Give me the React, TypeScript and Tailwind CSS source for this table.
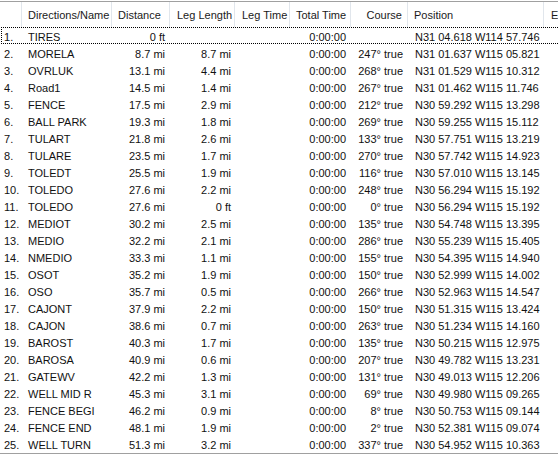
import React from "react";

const rows: [string, string, string, string, string, string][] = [
  ["TIRES", "0 ft", "", "", "", "N31 04.618 W114 57.746"],
  ["MORELA", "8.7 mi", "8.7 mi", "", "247° true", "N31 01.637 W115 05.821"],
  ["OVRLUK", "13.1 mi", "4.4 mi", "", "268° true", "N31 01.529 W115 10.312"],
  ["Road1", "14.5 mi", "1.4 mi", "", "267° true", "N31 01.462 W115 11.746"],
  ["FENCE", "17.5 mi", "2.9 mi", "", "212° true", "N30 59.292 W115 13.298"],
  ["BALL PARK", "19.3 mi", "1.8 mi", "", "269° true", "N30 59.255 W115 15.112"],
  ["TULART", "21.8 mi", "2.6 mi", "", "133° true", "N30 57.751 W115 13.219"],
  ["TULARE", "23.5 mi", "1.7 mi", "", "270° true", "N30 57.742 W115 14.923"],
  ["TOLEDT", "25.5 mi", "1.9 mi", "", "116° true", "N30 57.010 W115 13.145"],
  ["TOLEDO", "27.6 mi", "2.2 mi", "", "248° true", "N30 56.294 W115 15.192"],
  ["TOLEDO", "27.6 mi", "0 ft", "", "0° true", "N30 56.294 W115 15.192"],
  ["MEDIOT", "30.2 mi", "2.5 mi", "", "135° true", "N30 54.748 W115 13.395"],
  ["MEDIO", "32.2 mi", "2.1 mi", "", "286° true", "N30 55.239 W115 15.405"],
  ["NMEDIO", "33.3 mi", "1.1 mi", "", "155° true", "N30 54.395 W115 14.940"],
  ["OSOT", "35.2 mi", "1.9 mi", "", "150° true", "N30 52.999 W115 14.002"],
  ["OSO", "35.7 mi", "0.5 mi", "", "266° true", "N30 52.963 W115 14.547"],
  ["CAJONT", "37.9 mi", "2.2 mi", "", "150° true", "N30 51.315 W115 13.424"],
  ["CAJON", "38.6 mi", "0.7 mi", "", "263° true", "N30 51.234 W115 14.160"],
  ["BAROST", "40.3 mi", "1.7 mi", "", "135° true", "N30 50.215 W115 12.975"],
  ["BAROSA", "40.9 mi", "0.6 mi", "", "207° true", "N30 49.782 W115 13.231"],
  ["GATEWV", "42.2 mi", "1.3 mi", "", "131° true", "N30 49.013 W115 12.206"],
  ["WELL MID R", "45.3 mi", "3.1 mi", "", "69° true", "N30 49.980 W115 09.265"],
  ["FENCE BEGI", "46.2 mi", "0.9 mi", "", "8° true", "N30 50.753 W115 09.144"],
  ["FENCE END", "48.1 mi", "1.9 mi", "", "2° true", "N30 52.381 W115 09.074"],
  ["WELL TURN", "51.3 mi", "3.2 mi", "", "337° true", "N30 54.952 W115 10.363"],
];

const cols = "grid grid-cols-[22px_90px_58px_65px_55px_61px_57px_136px_40px]";

export default function App() {
  return (
    <div
      className="w-[558px] h-[462px] bg-white overflow-hidden text-[11px] text-[#111]"
      style={{ fontFamily: '"Liberation Sans", Arial, sans-serif' }}
    >
      <div className="h-px bg-white" />
      <div className="border-t border-[#a0a0a0]">
        <div className={`${cols} h-[25px] items-stretch text-[#1a1a1a] whitespace-nowrap`}>
          <div className="border-r border-[#e1e6ec]" />
          <div className="flex items-center pt-[2px] pl-[6px] border-r border-[#e1e6ec]">Directions/Name</div>
          <div className="flex items-center pt-[2px] pl-[6px] border-r border-[#e1e6ec]">Distance</div>
          <div className="flex items-center pt-[2px] pl-[7px] border-r border-[#e1e6ec]">Leg Length</div>
          <div className="flex items-center pt-[2px] pl-[7px] border-r border-[#e1e6ec]">Leg Time</div>
          <div className="flex items-center pt-[2px] pl-[6px] border-r border-[#e1e6ec]">Total Time</div>
          <div className="flex items-center pt-[2px] justify-end pr-[5px] border-r border-[#e1e6ec]">Course</div>
          <div className="flex items-center pt-[2px] pl-[6px] border-r border-[#e1e6ec]">Position</div>
          <div className="flex items-center pt-[2px] pl-[7px] overflow-hidden">El</div>
        </div>
        <div className="h-[427px] border-b border-[#a0a0a0]">
          {rows.map((r, i) => (
            <div key={i} className={`${cols} relative h-[17px] pt-[2px] items-center whitespace-nowrap`}>
              {i === 0 && (
                <div className="absolute top-0 bottom-0 left-px right-[-20px] border border-dotted border-black" />
              )}
              <div className="pl-[4px]">{i + 1}.</div>
              <div className="pl-[6px] overflow-hidden">{r[0]}</div>
              <div className="text-right pr-[5px]">{r[1]}</div>
              <div className="text-right pr-[4px]">{r[2]}</div>
              <div className="text-right pr-[5px]">{r[3]}</div>
              <div className="text-right pr-[5px]">0:00:00</div>
              <div className="text-right pr-[5px]">{r[4]}</div>
              <div className="pl-[7px]">{r[5]}</div>
              <div />
            </div>
          ))}
        </div>
      </div>
    </div>
  );
}
